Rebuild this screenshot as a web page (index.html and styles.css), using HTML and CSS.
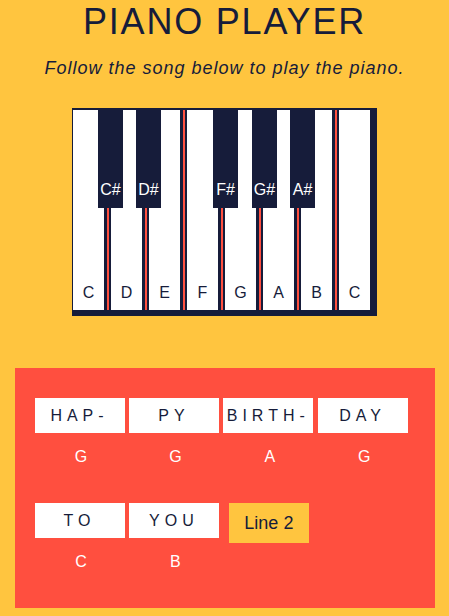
FILE: index.html
```html
<!DOCTYPE html>
<html lang="en">
<head>
<meta charset="utf-8">
<title>Piano Player</title>
<link rel="stylesheet" href="styles.css">
</head>
<body>
  <h1 class="title">PIANO PLAYER</h1>
  <p class="subtitle">Follow the song below to play the piano.</p>

  <div class="piano">
    <div class="white-key"><span class="key-label">C</span></div>
    <div class="white-key"><span class="key-label">D</span></div>
    <div class="white-key"><span class="key-label">E</span></div>
    <div class="white-key"><span class="key-label">F</span></div>
    <div class="white-key"><span class="key-label">G</span></div>
    <div class="white-key"><span class="key-label">A</span></div>
    <div class="white-key"><span class="key-label">B</span></div>
    <div class="white-key"><span class="key-label">C</span></div>

    <div class="black-key black-cs"><span class="key-label">C#</span></div>
    <div class="black-key black-ds"><span class="key-label">D#</span></div>
    <div class="black-key black-fs"><span class="key-label">F#</span></div>
    <div class="black-key black-gs"><span class="key-label">G#</span></div>
    <div class="black-key black-as"><span class="key-label">A#</span></div>
  </div>

  <section class="song">
    <div class="line">
      <div class="word"><div class="card">HAP-</div><div class="note">G</div></div>
      <div class="word"><div class="card">PY</div><div class="note">G</div></div>
      <div class="word"><div class="card">BIRTH-</div><div class="note">A</div></div>
      <div class="word"><div class="card">DAY</div><div class="note">G</div></div>
    </div>
    <div class="line">
      <div class="word"><div class="card">TO</div><div class="note">C</div></div>
      <div class="word"><div class="card">YOU</div><div class="note">B</div></div>
      <button class="next-line" type="button">Line 2</button>
    </div>
  </section>
</body>
</html>
```

FILE: styles.css
```css
* {
  box-sizing: content-box;
}

body {
  margin: 0;
  background: #ffc53f;
  color: #161c3a;
  font-family: "Liberation Sans", Arial, sans-serif;
}

.title {
  margin: 1px 0 0;
  text-align: center;
  font-size: 36px;
  font-weight: normal;
  letter-spacing: 1.8px;
  line-height: 41px;
}

.subtitle {
  margin: 16px 0 0;
  text-align: center;
  font-size: 18px;
  font-style: italic;
  letter-spacing: 1px;
  line-height: 20px;
}

.piano {
  position: relative;
  display: flex;
  width: 304px;
  margin: 30px auto 0;
  padding: 2px 0 6px 1px;
  background: #161c3a;
}

.white-key {
  width: 31px;
  height: 200px;
  background: #ffffff;
  background-clip: content-box;
  border-right: 3.5px solid #161c3a;
  display: flex;
  align-items: flex-end;
  justify-content: center;
}

.white-key + .white-key {
  border-left: 2px solid #ff4f3f;
  padding-left: 2px;
}

.white-key .key-label {
  margin-bottom: 8px;
  font-size: 16px;
  line-height: 18px;
  color: #161c3a;
}

.black-key {
  position: absolute;
  top: 2px;
  width: 25px;
  height: 98px;
  background: #161c3a;
  display: flex;
  align-items: flex-end;
  justify-content: center;
}

.black-key .key-label {
  margin-bottom: 9px;
  font-size: 16px;
  line-height: 18px;
  color: #ffffff;
}

.black-cs { left: 26px; }
.black-ds { left: 64px; }
.black-fs { left: 141px; }
.black-gs { left: 180px; }
.black-as { left: 218px; }

.song {
  width: 380px;
  margin: 52px auto 0;
  padding: 30px 20px 37px;
  background: #ff4f3f;
  display: flex;
  flex-direction: column;
  gap: 37px;
}

.line {
  display: flex;
  gap: 4.4px;
  align-items: flex-start;
}

.word {
  width: 90px;
  display: flex;
  flex-direction: column;
  align-items: center;
}

.card {
  width: 90px;
  height: 35px;
  background: #ffffff;
  display: flex;
  align-items: center;
  justify-content: center;
  font-size: 16px;
  letter-spacing: 5px;
  color: #161c3a;
}

.note {
  margin-top: 15px;
  padding-left: 3px;
  font-size: 16px;
  line-height: 18px;
  color: #ffffff;
}

.next-line {
  margin-left: 5.6px;
  width: 80px;
  height: 40px;
  padding: 0;
  border: none;
  background: #ffc53f;
  color: #161c3a;
  font-family: "Liberation Sans", Arial, sans-serif;
  font-size: 18px;
}
```
